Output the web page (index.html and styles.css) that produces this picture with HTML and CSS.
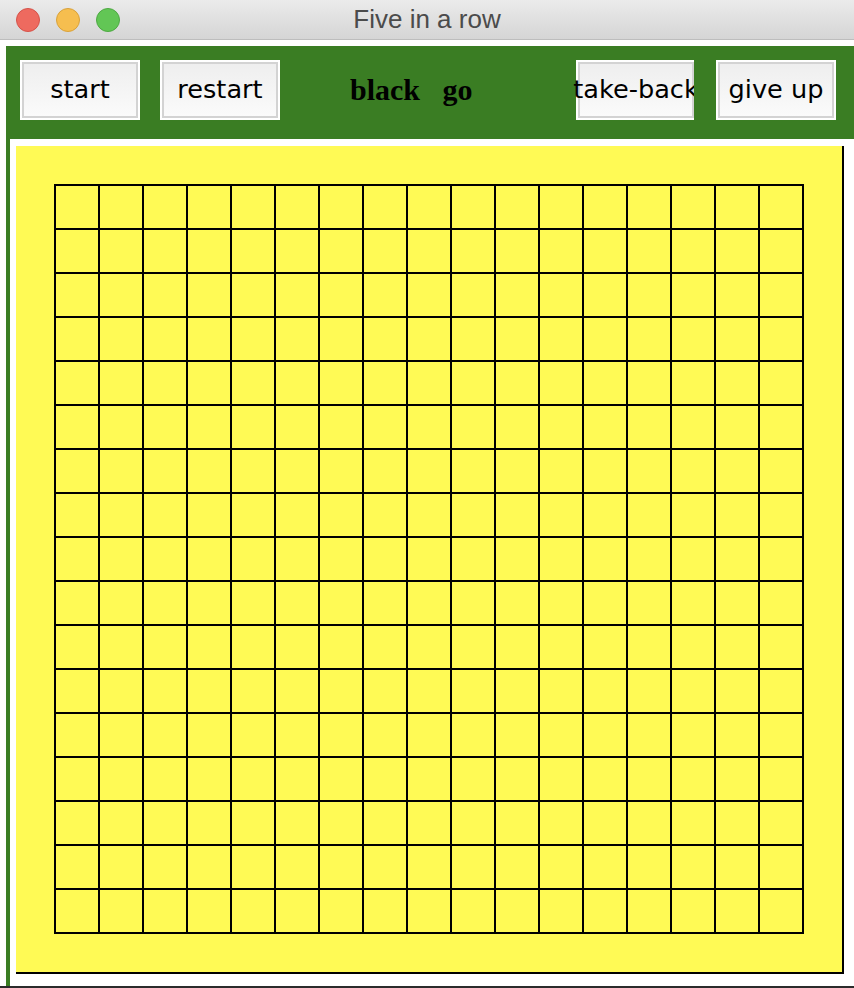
FILE: index.html
```html
<!DOCTYPE html>
<html>
<head>
<meta charset="utf-8">
<title>Five in a row</title>
<link rel="stylesheet" href="styles.css">
</head>
<body>
<div class="window">
  <div class="titlebar">
    <div class="lights">
      <span class="light red"></span>
      <span class="light yellow"></span>
      <span class="light green"></span>
    </div>
    <div class="title">Five in a row</div>
  </div>
  <div class="content">
    <div class="frame">
      <div class="toolbar">
        <button class="btn">start</button>
        <button class="btn">restart</button>
        <div class="status">black   go</div>
        <button class="btn btn-clip">take-back</button>
        <button class="btn btn-last">give up</button>
      </div>
      <div class="board-panel">
        <div class="board">
          <div class="grid"></div>
        </div>
      </div>
    </div>
  </div>
  <div class="bottom-edge"></div>
</div>
</body>
</html>
```
FILE: styles.css
```css
html, body {
  margin: 0;
  padding: 0;
  background: #ffffff;
}
.window {
  width: 854px;
  height: 988px;
  overflow: hidden;
  display: flex;
  flex-direction: column;
}
.titlebar {
  height: 39px;
  flex: none;
  border-bottom: 1px solid #bdbdbd;
  background: linear-gradient(#ebebeb, #d5d5d5);
  display: flex;
  align-items: center;
  position: relative;
}
.lights {
  display: flex;
  gap: 16px;
  padding-left: 16px;
  padding-top: 1px;
}
.light {
  width: 22px;
  height: 22px;
  border-radius: 50%;
  display: block;
}
.red { background: #ee6a5f; border: 1px solid #d5534a; }
.yellow { background: #f6be4f; border: 1px solid #d9a23b; }
.green { background: #62c655; border: 1px solid #4ea943; }
.title {
  position: absolute;
  left: 0;
  right: 0;
  top: 0;
  line-height: 39px;
  text-align: center;
  font-family: "Liberation Sans", Arial, sans-serif;
  font-size: 26px;
  color: #4b4b4b;
}
.content {
  flex: none;
  height: 940px;
  padding: 6px 0 0 6px;
}
.frame {
  background: #3a7d23;
  height: 940px;
  display: flex;
  flex-direction: column;
}
.toolbar {
  height: 93px;
  flex: none;
  display: flex;
  align-items: flex-start;
  padding: 14px 0 0 14px;
  box-sizing: border-box;
}
.btn {
  flex: none;
  width: 120px;
  height: 60px;
  box-sizing: border-box;
  margin: 0 20px 0 0;
  padding: 0 0 3px 0;
  border: 2px solid #ffffff;
  box-shadow: inset 0 0 0 2px #d3d3d3;
  background: linear-gradient(#eeeeee, #fbfbfb);
  font-family: "DejaVu Sans", Verdana, sans-serif;
  font-size: 25.6px;
  color: #000000;
  white-space: nowrap;
  text-align: center;
  display: flex;
  align-items: center;
  justify-content: center;
}
.btn-last {
  margin-right: 0;
}
.btn-clip {
  clip-path: inset(0 2px 0 -10px);
}
.status {
  flex: none;
  width: 156px;
  margin: 0 70px 0 50px;
  height: 60px;
  line-height: 60px;
  font-family: "Liberation Serif", "Times New Roman", serif;
  font-weight: bold;
  font-size: 30px;
  color: #000000;
  white-space: pre;
}
.board-panel {
  flex: 1;
  margin-left: 4px;
  background: #ffffff;
  padding: 7px 0 0 6px;
}
.board {
  background: #fffa55;
  border-right: 2px solid #000;
  border-bottom: 2px solid #000;
  padding: 38px;
  box-sizing: content-box;
  width: 750px;
  height: 750px;
}
.grid {
  width: 750px;
  height: 750px;
  background-image:
    linear-gradient(to right, #000 2px, transparent 2px),
    linear-gradient(to bottom, #000 2px, transparent 2px);
  background-size: 44px 44px;
}
.bottom-edge {
  flex: none;
  height: 2px;
  background: #2b2b2b;
}
```
